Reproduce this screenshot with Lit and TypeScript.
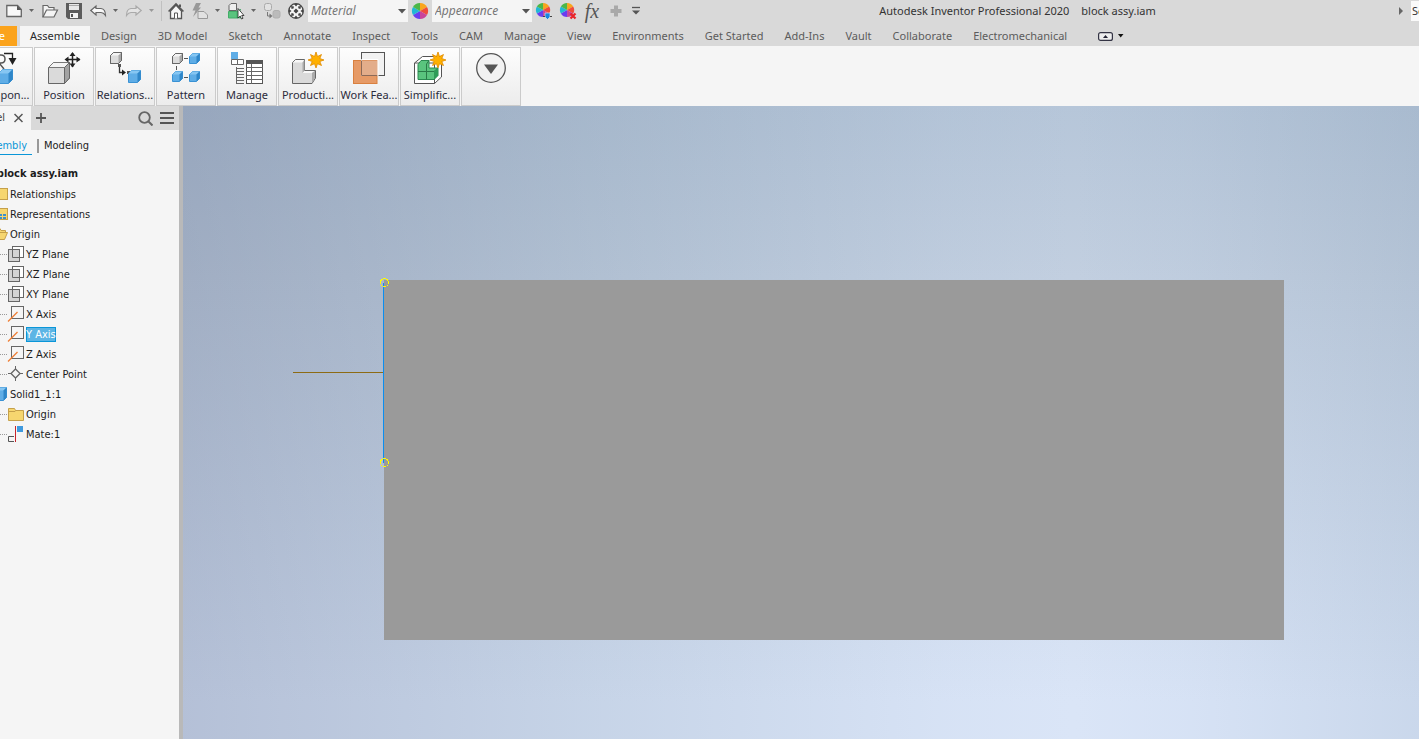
import { LitElement, html, css, svg, nothing, TemplateResult } from 'lit';
import { customElement } from 'lit/decorators.js';
import { classMap } from 'lit/directives/class-map.js';

const cube = (x: number, y: number, s: number, blue = true) => {
  const d = Math.round(s / 4);
  const [front, top, side, line] = blue
    ? ['#5fade6', '#86c6f2', '#2f86c8', '#3a92d4']
    : ['#dcdcdc', '#f4f4f4', '#a8a8a8', '#666'];
  return svg`
    <path d="M${x} ${y + d}l${d} ${-d}h${s - d}v${s - d}l${-d} ${d}h${d - s}z" fill=${front} stroke=${line}/>
    <path d="M${x} ${y + d}l${d} ${-d}h${s - d}l${-d} ${d}z" fill=${top}/>
    <path d="M${x + s} ${y}v${s - d}l${-d} ${d}v${d - s}z" fill=${side}/>
    ${blue ? nothing : svg`<path d="M${x} ${y + d}l${d} ${-d}h${s - d}v${s - d}l${-d} ${d}h${d - s}z" fill="none" stroke=${line}/>`}`;
};

const star = svg`<path d="M24 0L25.500 4.500L29.500 2.500L27.800 6.500L32 8L27.800 9.500L29.500 13.500L25.500 11.700L24 16L22.500 11.700L18.500 13.500L20.200 9.500L16 8L20.200 6.500L18.500 2.500L22.500 4.500z" fill="#ffb000" stroke="#e08a00" stroke-width=".8"/>`;

const wheel = svg`
  <path d="M8 8V0A8 8 0 0 1 15 4z" fill="#f9a51c"/>
  <path d="M8 8L15 4A8 8 0 0 1 15 12z" fill="#f04b3c"/>
  <path d="M8 8L15 12A8 8 0 0 1 8 16z" fill="#c9439b"/>
  <path d="M8 8V16A8 8 0 0 1 1 12z" fill="#6a3df0"/>
  <path d="M8 8L1 12A8 8 0 0 1 1 4z" fill="#21b7d6"/>
  <path d="M8 8L1 4A8 8 0 0 1 8 0z" fill="#4cb748"/>`;

const ICONS: Record<string, TemplateResult> = {
  new: svg`<path d="M.8 2.500H11.500L15.300 6.500V13.500H.8z" fill="#f8f8f8" stroke="#666" stroke-width="1.300"/><path d="M11 2.500L15.500 7H11z" fill="#555"/>`,
  open: svg`<path d="M1 14V2.500H5.500L7 4.500H12V7" fill="#f4f4f4" stroke="#666" stroke-width="1.200"/><path d="M1 14L4.500 7H15.500L12 14z" fill="#f4f4f4" stroke="#666" stroke-width="1.200"/>`,
  save: svg`<path d="M0 0H16V16H2L0 14z" fill="#5c5c5c"/><path d="M3 1H13V7H3z" fill="#e8e8e8"/><path d="M4 10H12V15H4z" fill="#f4f4f4"/><path d="M3 2.500H13" stroke="#aaa"/><path d="M5 11H7V14H5z" fill="#555"/>`,
  undo: svg`<path d="M.8 7.500L6 3V5.500H11Q15.500 6 15.500 12.500Q13.500 9.500 11 9.500H6V12z" fill="#f8f8f8" stroke="#666" stroke-width="1.200"/>`,
  redo: svg`<path d="M15.200 7.500L10 3V5.500H5Q.5 6 .5 12.500Q2.500 9.500 5 9.500H10V12z" fill="#e4e4e4" stroke="#aaa" stroke-width="1.200"/>`,
  home: svg`<path d="M2.500 8V15.500H13.500V8L8 2z" fill="#f6f6f6" stroke="#555" stroke-width="1.300"/><path d="M.6 8.500L8 1L15.400 8.500" fill="none" stroke="#555" stroke-width="1.600"/><path d="M6.500 15.500V10H9.500V15.500" fill="#fff" stroke="#555"/><path d="M12 1.500V4" stroke="#555" stroke-width="2"/>`,
  update: svg`<path d="M4 0H9L6.500 4.500H9L1 14L3.500 7.500H.5z" fill="#999"/><path d="M6 8.500H12L15.500 12V15.500H6z" fill="#e2e2e2" stroke="#999"/>`,
  select: svg`<path d="M1 2.500L3 .5H8.500V7.500H1z" fill="#eee" stroke="#666"/><path d="M.5 8.500H8.500V15H.5z" fill="#5ac47e" stroke="#43ad68"/><path d="M8.500 8.500L12.500 6.500V15H8.500" fill="#5ac47e" stroke="#2f9c58" stroke-dasharray="2 1"/><path d="M10 5.500V15L12.200 13L13.500 16L15 15.300L13.700 12.500H16z" fill="#fff" stroke="#222" stroke-width=".8"/>`,
  replace: svg`<rect x=".5" y=".5" width="7" height="7" rx="2" fill="#e2e2e2" stroke="#aaa"/><rect x="9" y="7.500" width="7" height="7.500" rx="2" fill="#bbb" stroke="#b0b0b0"/><path d="M3.500 9V13H6" fill="none" stroke="#777"/><path d="M5.500 10.500L8.500 13L5.500 15.500z" fill="#777"/>`,
  ball: svg`<circle cx="8" cy="8" r="7.300" fill="#f4f4f4" stroke="#444" stroke-width="1.300"/><path d="M6 1H10L8 3.500zM6 15H10L8 12.500zM1 6V10L3.500 8zM15 6V10L12.500 8zM8 5.500L10.500 8L8 10.500L5.500 8zM3 3L6 3.500L5.500 5.500L3.500 6zM13 3L10 3.500L10.500 5.500L12.500 6zM3 13L6 12.500L5.500 10.500L3.500 10zM13 13L10 12.500L10.500 10.500L12.500 10z" fill="#444"/>`,
  wheel,
  wheelAdjust: svg`<g transform="scale(.88)">${wheel}</g><path d="M9 10H14V14L11.500 16.500L9 14z" fill="#1a86e0" stroke="#eee" stroke-width=".6"/><path d="M7 13.500H9M14 13.500H16" stroke="#444"/>`,
  wheelClear: svg`<g transform="scale(.88)">${wheel}</g><path d="M10.500 10.500L15.500 15.500M15.500 10.500L10.500 15.500" stroke="#e8252a" stroke-width="2.200"/>`,
  plus: svg`<path d="M8 2.500V13.500M2.500 8H13.500" stroke="#a9a9a9" stroke-width="4"/>`,
  customize: svg`<path d="M4 4.500H12" stroke="#555" stroke-width="1.300"/><path d="M4 7.500H12L8 11.500z" fill="#555"/>`,

  component: svg`<path d="M3 3H14Q18 3 18 7T14 11H8M12 11L17 17" fill="none" stroke="#555" stroke-width="1.500"/><path d="M17 1.500H25.500V6" fill="none" stroke="#222" stroke-width="1.300"/><path d="M21.500 6H29.500L25.500 13z" fill="#222"/>${cube(11.5, 17.5, 14)}`,
  position: svg`<path d="M.5 15.500L5.500 10.500H21.500V26L16.500 31.500H.5z" fill="#dadada" stroke="#666"/><path d="M.5 15.500L5.500 10.500H21.500L16.500 15.500z" fill="#f4f4f4" stroke="#777"/><path d="M16.500 15.500L21.500 10.500V26L16.500 31.500z" fill="#a2a2a2" stroke="#666"/><path d="M24.500 1V15M18 7.500H32" stroke="#222" stroke-width="1.500"/><path d="M24.500 0L27.500 4H21.500zM24.500 15.500L21.500 11.500H27.500zM16.500 7.500L20.500 4.500V10.500zM32.500 7.500L28.500 4.500V10.500z" fill="#222"/>`,
  relations: svg`${cube(1.5, 0.5, 11, false)}<path d="M10.500 12V20.500H14" fill="none" stroke="#333" stroke-width="1.300"/><path d="M9 12H12V15H9zM18 19H21V22H18z" fill="#555"/><path d="M13 17.500L17 20.500L13 23.500z" fill="#222"/>${cube(19.5, 18.5, 12)}`,
  pattern: svg`${cube(2.5, 1.5, 10, false)}${cube(19.5, 1.5, 10)}${cube(2.5, 19.5, 10)}${cube(19.5, 19.5, 10)}<path d="M14 6.500H18M14 25.500H18M6.500 14V18" stroke="#555"/>`,
  manage: svg`<rect x="0" y="0" width="7" height="7" fill="#5fade6"/><path d="M.5 7.500H6.500V12.500H.5zM6.500 7.500H12.500V12.500H6.500z" fill="#fff" stroke="#666"/><path d="M5.500 15V32M6 16.500H13M6 19.500H13M6 22.500H13M6 25.500H13M6 28.500H13M6 31.500H13" stroke="#666"/><rect x="15.500" y="8.500" width="16" height="23" fill="#fff" stroke="#555"/><path d="M15 8H32V12H15z" fill="#555"/><path d="M15 15.500H32M15 19.500H32M15 23.500H32M15 27.500H32M20.500 12V32" stroke="#666"/>`,
  product: svg`<path d="M.5 10.500L3.500 7.500H12.500V18.500H23.500V26L20 31.500H.5z" fill="#dadada" stroke="#666"/><path d="M1 10.500L3.500 8H12L10.500 10.500zM10.500 21L12.500 19H23L20 21z" fill="#f8f8f8"/><path d="M20 21L23 18.800V26L20 31zM10.500 10.500L12.500 8V18.500L10.500 21z" fill="#aaa"/>${star}`,
  workfeat: svg`<rect x="8.500" y=".5" width="23" height="23" fill="#f2f2f2" stroke="#555"/><rect x=".5" y="8.500" width="23.500" height="23" fill="#e69a66" stroke="#d9803f"/><path d="M8.500 8.500H24.500V23.500H8.500z" fill="#e3ad8a"/><path d="M8.500 24V7.500H25V24" fill="none" stroke="#fff"/><path d="M8.500 8.500V23.500H24" fill="none" stroke="#8c6a58"/>`,
  simplify: svg`<path d="M.5 11L8.500 4.500H27.500V25L20.500 31.500H.5z" fill="#fff" stroke="#555"/><path d="M.5 11H20.500V31.500M20.500 11L27.500 4.500" fill="none" stroke="#555"/><path d="M4 12.500L7 8.500H15V16H24V23.500L20 27.500H4z" fill="#5ac47e" stroke="#2a8a50"/><path d="M15 8.500L12.500 12V19.500H20L24 16M12.500 19.500V27.500M4 19.500H12.500" fill="none" stroke="#2a7a48"/><path d="M20 19.500L24 16V23.500L20 27.500z" fill="#2f9c58"/>${star}`,
  more: svg`<circle cx="16" cy="16" r="14.300" fill="#f2f2f2" stroke="#555" stroke-width="1.300"/><path d="M9 12.500H23L16 22z" fill="#555"/>`,

  folder: svg`<path d="M.5 2.500H6.500L7.500 4.500H15.500V14.500H.5z" fill="#f6d66f" stroke="#c5a04a"/><path d="M1 5.500H7L8 4.500" fill="none" stroke="#c5a04a"/>`,
  relFolder: svg`<rect x=".5" y="2.500" width="15" height="11" fill="#f6d66f" stroke="#c5a04a"/>`,
  repFolder: svg`<rect x=".5" y="2.500" width="15" height="11" fill="#f6d66f" stroke="#c5a04a"/><path d="M8 8H10V10H8zM11 8H14V10H11zM8 11H10V13H8zM11 11H14V13H11z" fill="#3b8fd0"/>`,
  openFolder: svg`<path d="M1 13V2.500H8L9 4.500H13.500V7" fill="#f6d66f" stroke="#c5a04a"/><path d="M1 13.500L4 6.500H15.500L12.500 13.500z" fill="#f6d66f" stroke="#c5a04a"/>`,
  plane: svg`<rect x="4.500" y=".5" width="11" height="11" fill="#fff" stroke="#666"/><rect x=".5" y="3.500" width="11" height="12" fill="#d4d4d4" stroke="#666"/><path d="M4.500 3.500V11.500H11.500" fill="none" stroke="#666"/>`,
  axis: svg`<rect x="3.500" y=".5" width="12" height="12" fill="#f5f5f5" stroke="#666"/><path d="M0 15.500L9.500 6" stroke="#ee7d32" stroke-width="1.300"/>`,
  center: svg`<path d="M7.500 0V15M0 7.500H15" stroke="#666"/><path d="M7.500 3L12 7.500L7.500 12L3 7.500z" fill="#f5f5f5" stroke="#666" stroke-width="1.300"/>`,
  part: svg`${cube(1.5, 1.5, 13)}`,
  mate: svg`<path d="M7.500 0V16" stroke="#c8242b"/><rect x="9" y="0" width="6" height="6" fill="#3f9ade"/><path d="M6 10.500H.5V15.500H6" fill="none" stroke="#555"/>`,
};

const icon = (name: string, size = 16) =>
  html`<svg width=${size} height=${size} viewBox="0 0 ${size} ${size}" overflow="visible" aria-hidden="true">${ICONS[name]}</svg>`;

const base = css`
  * { box-sizing: border-box; }
  button { font: inherit; color: inherit; border: 0; padding: 0; margin: 0; background: none; }
  svg { display: block; flex: none; }
`;

@customElement('quick-access-bar')
class QuickAccessBar extends LitElement {
  static styles = [base, css`
    :host { display: flex; align-items: center; height: 22px; padding-left: 2px; color: #333; }
    .tool { flex: 0 0 24px; height: 22px; display: grid; place-items: center; }
    .drop { flex: 0 0 12px; height: 22px; display: grid; place-items: center; }
    .narrow { flex-basis: 16px; }
    .sep { flex: 0 0 6px; height: 20px; display: grid; place-items: center; }
    .sep::before { content: ''; width: 1px; height: 20px; background: #c0c0c0; }
    .fx { font: italic 20px/20px 'Liberation Serif', serif; color: #555; }
    .combo { position: relative; flex: 0 0 100px; height: 22px; background: #f5f5f5; }
    .combo select { appearance: none; width: 100%; height: 100%; border: 0; border-radius: 0; padding: 0 16px 0 3px; background: transparent; color: #777; font: italic 12px/20px 'Noto Sans', sans-serif; }
    .combo svg { position: absolute; right: 2px; top: 9px; pointer-events: none; }
    .title { flex: 1; display: flex; justify-content: center; gap: 12px; line-height: 22px; white-space: pre; }
    .expand { flex: 0 0 20px; display: grid; place-items: center; }
    .search { flex: 0 0 8px; width: 8px; height: 20px; border: 0; border-radius: 0; padding: 0 0 0 1px; background: #fafafa; font: inherit; }
    .search::placeholder { color: #333; }
  `];

  tool(name: string, label: string) {
    return html`<button class="tool" aria-label=${label}>${icon(name)}</button>`;
  }
  drop(label: string, color = '#666') {
    return html`<button class="drop" aria-label=${label}><svg width="6" height="4"><path d="M0 0H5L2.500 3z" fill=${color}/></svg></button>`;
  }
  combo(name: string) {
    return html`<div class="combo"><select aria-label=${name}><option>${name}</option></select>
      <svg width="8" height="5"><path d="M0 0H8L4 4.500z" fill="#555"/></svg></div>`;
  }
  render() {
    return html`
      ${this.tool('new', 'New')}${this.drop('New options')}
      ${this.tool('open', 'Open')}${this.tool('save', 'Save')}
      ${this.tool('undo', 'Undo')}${this.drop('Undo history')}
      ${this.tool('redo', 'Redo')}${this.drop('Redo history', '#999')}
      <span class="sep"></span>
      ${this.tool('home', 'Home')}
      ${this.tool('update', 'Update')}${this.drop('Update options')}
      ${this.tool('select', 'Select')}${this.drop('Select options')}
      ${this.tool('replace', 'Replace')}${this.tool('ball', 'Materials')}
      ${this.combo('Material')}${this.tool('wheel', 'Appearances')}${this.combo('Appearance')}
      ${this.tool('wheelAdjust', 'Adjust')}${this.tool('wheelClear', 'Clear')}
      <button class="tool fx" aria-label="Parameters">fx</button>
      ${this.tool('plus', 'Add')}
      <button class="tool narrow" aria-label="Customize">${icon('customize')}</button>
      <div class="title"><span>Autodesk Inventor Professional 2020</span><span>block assy.iam</span></div>
      <button class="expand" aria-label="Expand search"><svg width="4" height="8"><path d="M0 0L4 4L0 8z" fill="#666"/></svg></button>
      <input class="search" aria-label="Search" placeholder="Search Help &amp; Commands...">
    `;
  }
}

const TABS = ['Assemble', 'Design', '3D Model', 'Sketch', 'Annotate', 'Inspect', 'Tools', 'CAM', 'Manage', 'View',
  'Environments', 'Get Started', 'Add-Ins', 'Vault', 'Collaborate', 'Electromechanical'];

const PANELS: [string, string][] = [
  ['component', 'Compon...'], ['position', 'Position'], ['relations', 'Relations...'], ['pattern', 'Pattern'],
  ['manage', 'Manage'], ['product', 'Producti...'], ['workfeat', 'Work Fea...'], ['simplify', 'Simplific...'], ['more', ''],
];

@customElement('ribbon-bar')
class RibbonBar extends LitElement {
  static styles = [base, css`
    :host { display: block; overflow: hidden; }
    .tabs { display: flex; align-items: stretch; gap: 1px; height: 20px; }
    .file { width: 17px; margin-right: 2px; padding-right: 12px; display: flex; justify-content: flex-end; background: #fba31c; color: #fff; line-height: 20px; overflow: hidden; }
    .tab { padding: 0 10px; line-height: 20px; color: #5c5c5c; white-space: nowrap; }
    .tab.active { background: #f5f5f5; color: #2b2b2b; }
    .toggle { display: flex; align-items: center; gap: 5px; margin-left: 20px; }
    .panels { display: flex; gap: 1px; height: 60px; padding-top: 1px; background: #f5f5f5; margin-left: -27px; }
    .panel { flex: 0 0 60px; display: flex; flex-direction: column; align-items: center; padding-top: 4px; gap: 1px; border: 1px solid #cbcbcb; background: linear-gradient(#fdfdfd, #ececec); color: #2b2b3b; line-height: 20px; white-space: nowrap; }
  `];
  render() {
    return html`
      <nav class="tabs">
        <button class="file">File</button>
        ${TABS.map((t, i) => html`<button class=${classMap({ tab: true, active: i === 0 })}>${t}</button>`)}
        <button class="toggle" aria-label="Minimize ribbon">
          <svg width="15" height="9"><rect x=".6" y=".6" width="13.800" height="7.800" rx="2" fill="#eee" stroke="#334" stroke-width="1.200"/><path d="M5 6L7.500 3L10 6z" fill="#223"/></svg>
          <svg width="6" height="4"><path d="M0 0H5.500L2.700 3.500z" fill="#111"/></svg>
        </button>
      </nav>
      <div class="panels">
        ${PANELS.map(([name, label]) => html`<button class="panel" aria-label=${label || 'More'}>${icon(name, 32)}<span>${label}</span></button>`)}
      </div>`;
  }
}

interface TreeNode { label: string; icon: string; level: number; selected?: boolean }
const NODES: TreeNode[] = [
  { label: 'Relationships', icon: 'relFolder', level: 1 },
  { label: 'Representations', icon: 'repFolder', level: 1 },
  { label: 'Origin', icon: 'openFolder', level: 1 },
  { label: 'YZ Plane', icon: 'plane', level: 2 },
  { label: 'XZ Plane', icon: 'plane', level: 2 },
  { label: 'XY Plane', icon: 'plane', level: 2 },
  { label: 'X Axis', icon: 'axis', level: 2 },
  { label: 'Y Axis', icon: 'axis', level: 2, selected: true },
  { label: 'Z Axis', icon: 'axis', level: 2 },
  { label: 'Center Point', icon: 'center', level: 2 },
  { label: 'Solid1_1:1', icon: 'part', level: 1 },
  { label: 'Origin', icon: 'folder', level: 2 },
  { label: 'Mate:1', icon: 'mate', level: 2 },
];

@customElement('model-browser')
class ModelBrowser extends LitElement {
  static styles = [base, css`
    :host { display: block; overflow: hidden; background: #f5f5f5; border-right: 4px solid #b9b9b9; color: #1c1c1c; font: 11px/20px 'DejaVu Sans Condensed', 'DejaVu Sans', sans-serif; }
    .head { display: flex; align-items: center; height: 24px; background: #d9d9d9; padding-right: 5px; }
    .doc { width: 31px; height: 24px; padding-right: 8px; display: flex; align-items: center; justify-content: flex-end; gap: 9px; background: #f5f5f5; color: #444; }
    .add { margin: 0 auto 0 5px; }
    .find { margin-right: 7px; }
    .modes { display: flex; align-items: center; height: 32px; }
    .mode { line-height: 16px; }
    .mode.active { width: 32px; padding-right: 5px; display: flex; justify-content: flex-end; color: #0a96d8; border-bottom: 1px solid #0a96d8; }
    .bar { width: 2px; height: 14px; margin: 0 5px; background: #999; }
    .root { width: 78px; height: 20px; margin-top: 2px; display: flex; justify-content: flex-end; font-weight: bold; white-space: nowrap; }
    .tree { list-style: none; margin: 0; padding: 0; }
    .row { display: flex; align-items: center; gap: 2px; height: 20px; }
    .glyph { width: 8px; display: flex; justify-content: flex-end; }
    .deep .glyph { width: 24px; justify-content: space-between; align-items: center; }
    .link { width: 7px; border-top: 1px dotted #999; }
    .name { line-height: 15px; }
    .selected .name { background: #5cb5e5; color: #fff; box-shadow: 0 0 0 1px #0a96d8 inset; }
  `];
  render() {
    return html`
      <div class="head">
        <div class="doc"><span>Model</span><button aria-label="Close"><svg width="9" height="10"><path d="M.5 1L8.500 9M8.500 1L.5 9" stroke="#555" stroke-width="1.500"/></svg></button></div>
        <button class="add" aria-label="Add"><svg width="10" height="10"><path d="M5 0V10M0 5H10" stroke="#555" stroke-width="1.800"/></svg></button>
        <button class="find" aria-label="Search"><svg width="15" height="15"><circle cx="6.500" cy="6.500" r="5.300" fill="none" stroke="#666" stroke-width="1.800"/><path d="M10.500 10.500L14.500 14.500" stroke="#666" stroke-width="2"/></svg></button>
        <button aria-label="Menu"><svg width="14" height="12"><path d="M0 1H14M0 6H14M0 11H14" stroke="#555" stroke-width="2"/></svg></button>
      </div>
      <div class="modes"><button class="mode active">Assembly</button><span class="bar"></span><button class="mode">Modeling</button></div>
      <div class="root">block assy.iam</div>
      <ul class="tree">
        ${NODES.map(n => html`<li class=${classMap({ row: true, deep: n.level === 2, selected: !!n.selected })}>
          <span class="glyph">${n.level === 2 ? html`<span class="link"></span>` : nothing}${icon(n.icon)}</span><span class="name">${n.label}</span>
        </li>`)}
      </ul>`;
  }
}

@customElement('model-view')
class ModelView extends LitElement {
  static styles = css`
    :host {
      display: block; overflow: hidden;
      background:
        linear-gradient(to right, rgb(211,214,222), rgb(232,236,239) 33%, rgb(251,252,253) 62%, #fff 72%, rgb(251,252,253) 81%, rgb(236,240,243)),
        linear-gradient(rgb(182,198,217), rgb(194,207,224) 27%, rgb(218,229,247) 94%);
      background-blend-mode: multiply;
    }
    .scene { display: block; width: 100%; height: 100%; }
  `;
  render() {
    return html`<svg class="scene" role="img" aria-label="Block">
      <rect x="201" y="174" width="900" height="360" fill="#9a9a9a"/>
      <path d="M110 266.500H200" stroke="#8d6b14"/>
      <path d="M200.500 177V357" stroke="#0a8ef0"/>
      <g fill="none" stroke="#ffff00" shape-rendering="crispEdges"><circle cx="201.500" cy="176.500" r="4"/><circle cx="201.500" cy="356.500" r="4"/></g>
    </svg>`;
  }
}

@customElement('app-root')
class AppRoot extends LitElement {
  static styles = css`
    :host { display: flex; flex-direction: column; height: 100vh; overflow: hidden; background: #d9d9d9; font: 11px/20px 'Noto Sans', 'Open Sans', sans-serif; }
    .ribbon { margin-top: 4px; }
    .body { flex: 1; min-height: 0; display: flex; }
    .browser { flex: 0 0 183px; box-sizing: border-box; }
    .view { flex: 1; min-width: 0; }
  `;
  render() {
    return html`
      <quick-access-bar></quick-access-bar>
      <ribbon-bar class="ribbon"></ribbon-bar>
      <div class="body"><model-browser class="browser"></model-browser><model-view class="view"></model-view></div>`;
  }
}
